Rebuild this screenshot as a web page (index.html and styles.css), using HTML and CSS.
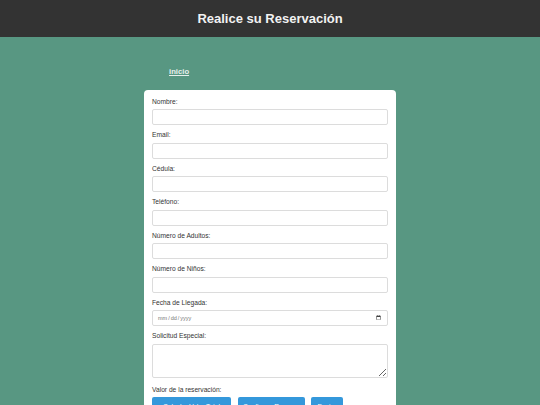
FILE: index.html
```html
<!DOCTYPE html>
<html lang="es">
<head>
<meta charset="utf-8">
<title>Realice su Reservación</title>
<link rel="stylesheet" href="styles.css">
</head>
<body>
<header class="topbar">
  <h1 class="title">Realice su Reservación</h1>
</header>
<nav class="nav">
  <a class="nav-link" href="#">inicio</a>
</nav>
<main class="card">
  <form class="form">
    <label class="label" for="nombre">Nombre:</label>
    <input class="field" id="nombre" type="text">
    <label class="label" for="email">Email:</label>
    <input class="field" id="email" type="email">
    <label class="label" for="cedula">Cédula:</label>
    <input class="field" id="cedula" type="text">
    <label class="label" for="telefono">Teléfono:</label>
    <input class="field" id="telefono" type="tel">
    <label class="label" for="adultos">Número de Adultos:</label>
    <input class="field" id="adultos" type="number">
    <label class="label" for="ninos">Número de Niños:</label>
    <input class="field" id="ninos" type="number">
    <label class="label" for="fecha">Fecha de Llegada:</label>
    <input class="field field-date" id="fecha" type="date">
    <label class="label" for="solicitud">Solicitud Especial:</label>
    <textarea class="field field-area" id="solicitud"></textarea>
    <label class="label">Valor de la reservación:</label>
    <div class="actions">
      <button class="btn btn-calc" type="button">Calcular Valor Total</button>
      <button class="btn btn-confirm" type="button">Confirmar Reserva</button>
      <button class="btn btn-send" type="submit">Enviar</button>
    </div>
  </form>
</main>
</body>
</html>
```
FILE: styles.css
```css
* {
  box-sizing: border-box;
}

html, body {
  margin: 0;
  padding: 0;
}

body {
  background: #589782;
  font-family: "Liberation Sans", Arial, sans-serif;
  color: #333;
  height: 405px;
  overflow: hidden;
}

.topbar {
  background: #333333;
  height: 37px;
  display: flex;
  align-items: center;
  justify-content: center;
}

.title {
  margin: 0;
  font-size: 13px;
  font-weight: bold;
  color: #f2f2f2;
  line-height: 1;
}

.nav {
  width: 252px;
  margin: 0 auto;
  padding: 29.5px 0 0 25px;
  height: 53px;
  display: flex;
  align-items: flex-start;
}

.nav-link {
  font-size: 7.7px;
  font-weight: bold;
  color: #e6efec;
  text-decoration: underline;
  line-height: 9px;
}

.card {
  width: 252px;
  margin: 0 auto;
  background: #ffffff;
  border-radius: 4px;
  padding: 6.5px 8px 8px;
}

.form {
  display: flex;
  flex-direction: column;
}

.label {
  font-size: 6.67px;
  line-height: 9px;
  color: #333;
  margin-bottom: 3.5px;
}

.field {
  width: 236px;
  height: 16px;
  margin: 0 0 5px;
  border: 1px solid #dcdcdc;
  border-radius: 2px;
  background: #fff;
  font-family: "Liberation Sans", Arial, sans-serif;
  font-size: 6.67px;
  padding: 0 4px;
  outline: none;
}

.field-date {
  font-size: 5.5px;
  color: #777;
}

.field-area {
  height: 34px;
  margin-bottom: 7px;
  resize: vertical;
  padding: 3px 4px;
}

.actions {
  display: flex;
  gap: 6.5px;
}

.btn {
  height: 19px;
  border: none;
  border-radius: 2px;
  background: #3498db;
  color: #ffffff;
  font-family: "Liberation Sans", Arial, sans-serif;
  font-size: 6.67px;
  padding: 0 4px;
}

.btn-calc {
  width: 79px;
}

.btn-confirm {
  width: 67px;
}

.btn-send {
  width: 32px;
}
```
